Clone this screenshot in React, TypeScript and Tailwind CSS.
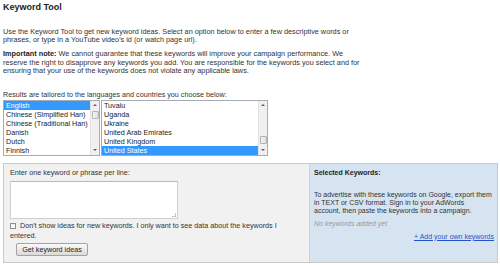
import React from "react";

const languages = [
  "English",
  "Chinese (Simplified Han)",
  "Chinese (Traditional Han)",
  "Danish",
  "Dutch",
  "Finnish",
];

const countries = [
  "Tuvalu",
  "Uganda",
  "Ukraine",
  "United Arab Emirates",
  "United Kingdom",
  "United States",
];

const ScrollBar: React.FC<{ thumbTop: number }> = ({ thumbTop }) => (
  <div className="relative w-[9px] h-full shrink-0 bg-[#f0f0f0] border-l border-[#e3e3e3] flex flex-col justify-between">
    <div className="h-[9px] flex items-center justify-center">
      <div className="w-0 h-0 border-l-[2px] border-r-[2px] border-b-[2px] border-l-transparent border-r-transparent border-b-[#606060]" />
    </div>
    <div
      className="absolute left-[1px] w-[7px] h-[8px] rounded-[1px] border border-[#b4b4b4] bg-gradient-to-r from-[#f4f4f4] to-[#dedede]"
      style={{ top: thumbTop }}
    />
    <div className="h-[9px] flex items-center justify-center">
      <div className="w-0 h-0 border-l-[2px] border-r-[2px] border-t-[2px] border-l-transparent border-r-transparent border-t-[#606060]" />
    </div>
  </div>
);

const ListBox: React.FC<{
  items: string[];
  selected: number;
  width: string;
  thumbTop: number;
}> = ({ items, selected, width, thumbTop }) => (
  <div className={`flex h-[56px] border border-[#a5acb5] bg-white ${width}`}>
    <div className="flex-1 min-w-0 flex flex-col">
      {items.map((it, i) => (
        <div
          key={it}
          className={
            i === selected
              ? "h-[9px] leading-[9px] pl-[2px] whitespace-nowrap overflow-hidden bg-[#3399ff] text-white"
              : "h-[9px] leading-[9px] pl-[2px] whitespace-nowrap overflow-hidden"
          }
        >
          {it}
        </div>
      ))}
    </div>
    <ScrollBar thumbTop={thumbTop} />
  </div>
);

const App: React.FC = () => {
  return (
    <div className="w-[500px] h-[265px] overflow-hidden bg-white text-[#333] text-[7px] font-['Liberation_Sans',Arial,sans-serif] pt-[3px] pl-[3px] pr-[2px]">
      <h1 className="text-[9px] leading-[9px] font-bold text-[#222]">
        Keyword Tool
      </h1>

      <p className="mt-[16px] text-[7.3px] leading-[8px] whitespace-nowrap">
        Use the Keyword Tool to get new keyword ideas. Select an option below
        to enter a few descriptive words or
        <br />
        phrases, or type in a YouTube video's id (or watch page url).
      </p>

      <p className="mt-[6px] text-[7.3px] leading-[8.5px] whitespace-nowrap">
        <b className="text-[#222]">Important note:</b> We cannot guarantee that
        these keywords will improve your campaign performance. We
        <br />
        reserve the right to disapprove any keywords you add. You are
        responsible for the keywords you select and for
        <br />
        ensuring that your use of the keywords does not violate any applicable
        laws.
      </p>

      <p className="mt-[15px] text-[7.2px] leading-[8px]">
        Results are tailored to the languages and countries you choose below:
      </p>

      <div className="flex gap-[1px] mt-[1px] text-[7.2px] text-[#222]">
        <ListBox items={languages} selected={0} width="w-[97px]" thumbTop={10} />
        <ListBox items={countries} selected={5} width="w-[167px]" thumbTop={35} />
      </div>

      <div className="mt-[7px] flex h-[100px] border border-[#c9c9c9]">
        <div className="w-[305px] bg-[#f1f1f1] pl-[6px] pt-[5px] text-[7.2px]">
          <div className="leading-[8px]">Enter one keyword or phrase per line:</div>
          <div className="relative mt-[4px] w-[168px] h-[38px] bg-white border border-[#cfcfcf] border-t-[#b9b9b9]">
            <div className="absolute right-[1px] bottom-[1px] w-[4px] h-[4px] border-r border-b border-[#c4c4c4]" />
          </div>
          <div className="mt-[2px] leading-[10px] whitespace-nowrap">
            <span className="inline-block align-[-1px] w-[6px] h-[6px] mr-[4px] border border-[#8f8f8f] bg-gradient-to-b from-[#f0f0f0] to-white" />
            Don't show ideas for new keywords. I only want to see data about
            the keywords I
            <br />
            entered.
          </div>
          <button className="ml-[6px] mt-[2px] w-[72px] h-[13px] text-[7.2px] leading-[11px] text-[#222] border border-[#a3a3a3] rounded-[2px] bg-gradient-to-b from-[#fafafa] to-[#dadada]">
            Get keyword ideas
          </button>
        </div>
        <div className="flex-1 bg-[#d6e4f1] border-l border-[#c3d2df] pl-[4px] pr-[3px] pt-[5px]">
          <div className="font-bold leading-[8px] text-[#222]">Selected Keywords:</div>
          <p className="mt-[14px] leading-[8px] whitespace-nowrap">
            To advertise with these keywords on Google, export them
            <br />
            in TEXT or CSV format. Sign in to your AdWords
            <br />
            account, then paste the keywords into a campaign.
          </p>
          <div className="mt-[5px] leading-[8px] italic text-[#999]">
            No keywords added yet
          </div>
          <div className="mt-[5px] leading-[8px] text-right">
            <span className="text-[#2255cc] underline">+ Add your own keywords</span>
          </div>
        </div>
      </div>
    </div>
  );
};

export default App;
